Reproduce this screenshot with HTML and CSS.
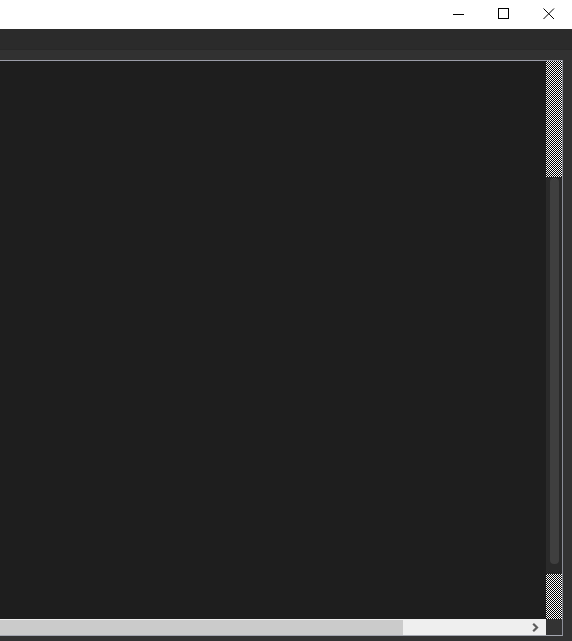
FILE: index.html
```html
<!DOCTYPE html>
<html>
<head>
<meta charset="utf-8">
<link rel="stylesheet" href="styles.css">
</head>
<body>
<div class="window">
  <div class="titlebar">
    <div class="ctl" title="Minimize">
      <svg width="12" height="12" viewBox="0 0 12 12"><path d="M0 6.5H11" stroke="#000" stroke-width="1"/></svg>
    </div>
    <div class="ctl" title="Maximize">
      <svg width="12" height="12" viewBox="0 0 12 12"><rect x="0.5" y="0.5" width="10" height="10" fill="none" stroke="#000" stroke-width="1"/></svg>
    </div>
    <div class="ctl" title="Close">
      <svg width="12" height="12" viewBox="0 0 12 12"><path d="M0.5 0.5L11 11M11 0.5L0.5 11" stroke="#000" stroke-width="1"/></svg>
    </div>
  </div>
  <div class="toolbar"></div>
  <div class="subbar"></div>
  <div class="main">
    <div class="editor">
      <div class="content"></div>
      <div class="vscroll">
        <div class="checker top"></div>
        <div class="vtrack"><div class="vthumb"></div></div>
        <div class="checker bottom"></div>
      </div>
      <div class="hscroll">
        <div class="hthumb"></div>
        <div class="harrow">
          <svg width="7" height="9" viewBox="0 0 7 9"><path d="M1.2 0.8L5 4.5L1.2 8.2" fill="none" stroke="#5c5c5c" stroke-width="2.2"/></svg>
        </div>
      </div>
      <div class="corner"></div>
    </div>
  </div>
</div>
</body>
</html>
```
FILE: styles.css
```css
html, body {
  margin: 0;
  padding: 0;
  width: 572px;
  height: 641px;
  overflow: hidden;
  background: #333333;
  font-family: "Liberation Sans", Arial, sans-serif;
}
.window {
  display: flex;
  flex-direction: column;
  height: 641px;
}
.titlebar {
  height: 29px;
  background: #ffffff;
  display: flex;
  justify-content: flex-end;
  padding-right: 1px;
  flex: none;
}
.ctl {
  width: 45px;
  height: 27px;
  display: flex;
  align-items: center;
  justify-content: center;
}
.toolbar {
  height: 20px;
  background: #2b2b2b;
  border-bottom: 1px solid #282828;
  flex: none;
}
.subbar {
  height: 10px;
  background: #313131;
  flex: none;
}
.main {
  flex: 1;
  background: #333333;
}
.editor {
  width: 562px;
  height: 574px;
  border-top: 1px solid #9b9da8;
  border-right: 1px solid #8c8e98;
  border-bottom: 1px solid #a4a7b0;
  background: #1e1e1e;
  display: grid;
  grid-template-columns: 546px 16px;
  grid-template-rows: 558px 16px;
}
.content {
  background: #1e1e1e;
}
.vscroll {
  display: flex;
  flex-direction: column;
}
.checker {
  background: conic-gradient(#ffffff 25%, #000000 0 50%, #ffffff 0 75%, #000000 0) 0 0 / 2px 2px;
  flex: none;
}
.checker.top {
  height: 116px;
}
.checker.bottom {
  height: 45px;
}
.vtrack {
  flex: 1;
  background: #2a2a2a;
  padding: 1px 3px 10px 4px;
  display: flex;
}
.vthumb {
  flex: 1;
  background: #3f3f3f;
  border-radius: 4px;
}
.hscroll {
  background: #efefef;
  display: flex;
  align-items: stretch;
}
.hthumb {
  width: 403px;
  margin-top: 1px;
  background: #cbcbcb;
}
.harrow {
  margin-left: auto;
  width: 16px;
  margin-right: 3px;
  display: flex;
  align-items: center;
  justify-content: center;
}
.corner {
  background: #333333;
}
```
